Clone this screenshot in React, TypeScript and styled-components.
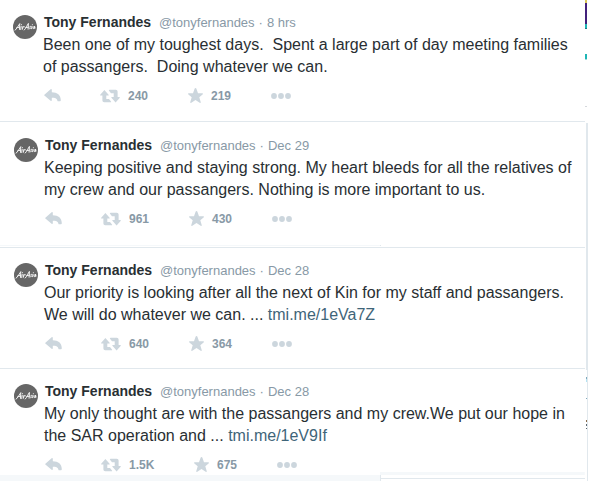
import React from "react";
import styled, { createGlobalStyle } from "styled-components";

const GlobalStyle = createGlobalStyle`
  * { box-sizing: border-box; }
  body { margin: 0; background: #fff; font-family: "Liberation Sans", Arial, sans-serif; color: #292f33; }
`;

const Page = styled.div`
  display: grid;
  grid-template-columns: minmax(0, 1fr) 4px;
`;

const Timeline = styled.main`
  min-width: 0;
`;

const Tweet = styled.article<{ $left: number; $top: number; $bottom: number; $line: boolean; $shade?: boolean }>`
  display: grid;
  grid-template-columns: 24px minmax(0, 1fr);
  column-gap: 6px;
  padding: ${(p) => `${p.$top}px 10px ${p.$bottom}px ${p.$left}px`};
  border-bottom: ${(p) => (p.$line ? "1px solid #e1e8ed" : "0")};
  background: ${(p) => (p.$shade ? "linear-gradient(#f5f8fa, #f5f8fa) right bottom / 35% 3px no-repeat" : "none")};
`;

const Avatar = styled.svg`
  display: block;
  width: 24px;
  height: 24px;
  margin-top: 3px;
`;

const Header = styled.header`
  display: flex;
  gap: 4px;
  padding-left: 1px;
  height: 22px;
  line-height: 21px;
  font-size: 13px;
  color: #8899a6;
  white-space: pre;
`;

const Name = styled.a`
  min-width: 111px;
  color: #292f33;
  font-size: 14px;
  font-weight: bold;
  text-decoration: none;
`;

const Handle = styled.a`
  color: #8899a6;
  text-decoration: none;
`;

const Text = styled.p`
  margin: 0;
  font-size: 16px;
  line-height: 22px;
  white-space: pre;
`;

const Link = styled.a`
  color: #3f6579;
  text-decoration: none;
`;

const Actions = styled.div`
  display: flex;
  align-items: center;
  height: 16px;
  margin-top: 10px;
  padding-left: 1px;
`;

const Action = styled.button<{ $w: number }>`
  display: flex;
  align-items: center;
  gap: 8px;
  width: ${(p) => p.$w}px;
  height: 16px;
  padding: 0;
  border: 0;
  background: none;
  color: #8899a6;
  font: bold 12px/16px "Liberation Sans", Arial, sans-serif;

  svg { display: block; flex: none; fill: #ccd6dd; }
`;

const Seam = styled.div`
  display: flex;
  height: 3px;
  border-bottom: 1px solid #e1e8ed;

  &::before {
    content: "";
    width: 65%;
    height: 1px;
    background: #f5f8fa;
    border-right: 1px solid #e1e8ed;
  }
`;

const Footer = styled.div`
  display: grid;
  grid-template-columns: 65fr 35fr;
  height: 6px;
  background: #f5f8fa;
`;

const FooterPanel = styled.div`
  border-left: 1px solid #e1e8ed;
  grid-column: 2;
  height: 6px;
  background: linear-gradient(#fff 3px, #e1e8ed 3px 4px, #fff 4px);
`;

const Edge = styled.div`
  display: flex;
  flex-direction: column;
`;

const Mark = styled.i<{ $h: number; $c?: string }>`
  flex: none;
  height: ${(p) => p.$h}px;
  width: 2px;
  background: ${(p) => p.$c ?? "transparent"};
`;

const Rail = styled.i`
  flex: none;
  align-self: flex-end;
  margin-right: 1px;
  height: 247px;
  width: 2px;
  background: #e1e8ed;
`;

const ThinRail = styled(Rail)`
  height: 111px;
  border-right: 1px solid #e1e8ed;
  background: linear-gradient(
    #fff 7px, #7fa9bd 7px 9px, #b5e3f2 9px 12px, #fff 12px 28px,
    #7fa9bd 28px 29px, #fff 29px 50px, #8a6a4a 50px 52px, #fff 52px 54px,
    #5b6670 54px 56px, #fff 56px 58px, #5b6670 58px 59px, #fff 59px
  );
`;

const Logo = () => (
  <Avatar viewBox="0 0 24 24" role="img" aria-label="AirAsia">
    <circle cx="12" cy="12" r="12" fill="#666" />
    <g fill="none" stroke="#f4f4f4" strokeWidth="1" strokeLinecap="round" strokeLinejoin="round">
      <path d="M2.2 15.2C4 13.6 5.3 10.7 6.8 8.6L6.5 14.4M3.8 12.7L7 12.2M8.2 11.5L7.7 14.5M9.4 14.3L10 11.4M9.8 12.4Q10.5 11 11.4 11.6" />
      <path d="M11.3 15C13 13.2 14 10.5 15.4 8.4L15.1 14.2M12.7 12.7L15.8 12.1M18 11.3C16.7 11 16.4 12.1 17.2 12.6C18 13.2 17.2 14.2 16.4 13.7M19 11.4L18.6 13.7M21.7 11.4C20.3 10.8 19.3 13.3 20.3 13.6Q21.2 13.6 21.6 11.5L21.4 13.5L22.3 13" />
      <path d="M8.5 9.7h.1M19.3 9.7h.1" />
    </g>
  </Avatar>
);

const ReplyIcon = () => (
  <svg width="17" height="16" viewBox="0 0 17 16">
    <path d="M.4 6.8L6.6 1.3Q7.8.6 7.8 2V4.3C13.3 4.3 16.8 7 16.8 12.3Q16.8 13.3 16 13.3H14.2C13.3 13.3 13.4 12.5 13.2 12C12.6 10.3 11.2 9.7 7.8 9.7V12Q7.8 13.4 6.6 12.7L.4 7.6Q-.1 7.2.4 6.8Z" />
  </svg>
);

const RetweetIcon = () => (
  <svg width="20" height="16" viewBox="0 0 20 16">
    <path d="M4.4 2L8.6 6.8Q9 7.6 8.2 7.6H6.3V10.9H9L11 13.4Q11.5 14.3 10.5 14.3H4.2Q2.4 14.3 2.4 12.5V7.6H.7Q-.2 7.6.2 6.8Z" />
    <path d="M15.6 14.6L11.4 9.8Q11 9 11.8 9H13.7V5.2H11L9 2.7Q8.5 1.8 9.5 1.8H15.8Q17.6 1.8 17.6 3.6V9H19.3Q20.2 9 19.8 9.8Z" />
  </svg>
);

const StarIcon = () => (
  <svg width="15" height="16" viewBox="0 0 15 16">
    <path d="M7.5 0Q8.1 0 8.4.8L10 5.2H14.3Q15.6 5.4 14.6 6.4L11.3 9.3L12.7 14Q12.9 15.3 11.7 14.7L7.5 12L3.3 14.7Q2.1 15.3 2.3 14L3.7 9.3L.4 6.4Q-.6 5.4.7 5.2H5L6.6.8Q6.9 0 7.5 0Z" />
  </svg>
);

const DotsIcon = () => (
  <svg width="20" height="16" viewBox="0 0 20 16">
    <circle cx="3" cy="8" r="2.9" />
    <circle cx="10" cy="8" r="2.9" />
    <circle cx="17" cy="8" r="2.9" />
  </svg>
);

type TweetData = {
  when: string;
  lines: [string, string];
  link?: string;
  retweets: string;
  likes: string;
  left: number;
  top: number;
  bottom: number;
  line: boolean;
  shade?: boolean;
};

const tweets: TweetData[] = [
  {
    when: "8 hrs",
    lines: ["Been one of my toughest days.  Spent a large part of day meeting families", "of passangers.  Doing whatever we can."],
    retweets: "240", likes: "219", left: 13, top: 12, bottom: 17, line: true,
  },
  {
    when: "Dec 29",
    lines: ["Keeping positive and staying strong. My heart bleeds for all the relatives of", "my crew and our passangers. Nothing is more important to us."],
    retweets: "961", likes: "430", left: 14, top: 13, bottom: 18, line: false,
  },
  {
    when: "Dec 28",
    lines: ["Our priority is looking after all the next of Kin for my staff and passangers.", "We will do whatever we can. ... "],
    link: "tmi.me/1eVa7Z",
    retweets: "640", likes: "364", left: 14, top: 12, bottom: 16, line: true,
  },
  {
    when: "Dec 28",
    lines: ["My only thought are with the passangers and my crew.We put our hope in", "the SAR operation and ... "],
    link: "tmi.me/1eV9If",
    retweets: "1.5K", likes: "675", left: 14, top: 12, bottom: 2, line: false, shade: true,
  },
];

const TweetItem = ({ t }: { t: TweetData }) => (
  <Tweet $left={t.left} $top={t.top} $bottom={t.bottom} $line={t.line} $shade={t.shade}>
    <Logo />
    <div>
      <Header>
        <Name href="#">Tony Fernandes</Name>
        <Handle href="#">@tonyfernandes</Handle>
        <span>·</span>
        <time>{t.when}</time>
      </Header>
      <Text>
        {t.lines[0]}
        {"\n"}
        {t.lines[1]}
        {t.link && <Link href="#">{t.link}</Link>}
      </Text>
      <Actions>
        <Action $w={56} aria-label="Reply"><ReplyIcon /></Action>
        <Action $w={t.retweets.length > 3 ? 93 : 88} aria-label={`Retweet ${t.retweets}`}><RetweetIcon />{t.retweets}</Action>
        <Action $w={83} aria-label={`Favorite ${t.likes}`}><StarIcon />{t.likes}</Action>
        <Action $w={20} aria-label="More"><DotsIcon /></Action>
      </Actions>
    </div>
  </Tweet>
);

const App = () => (
  <Page>
    <GlobalStyle />
    <Timeline>
      <TweetItem t={tweets[0]} />
      <TweetItem t={tweets[1]} />
      <Seam />
      <TweetItem t={tweets[2]} />
      <TweetItem t={tweets[3]} />
      <Footer><FooterPanel /></Footer>
    </Timeline>
    <Edge>
      <Mark $h={3} $c="#d9c85a" />
      <Mark $h={21} $c="#43217c" />
      <Mark $h={4} $c="#1fb5b5" />
      <Mark $h={1} $c="#167f86" />
      <Mark $h={25} />
      <Mark $h={5} $c="#1fb5b5" />
      <Mark $h={1} $c="#9fdcdc" />
      <Mark $h={46} />
      <Mark $h={1} $c="#d5d8dc" />
      <Mark $h={16} />
      <Rail />
      <ThinRail />
    </Edge>
  </Page>
);

export default App;
